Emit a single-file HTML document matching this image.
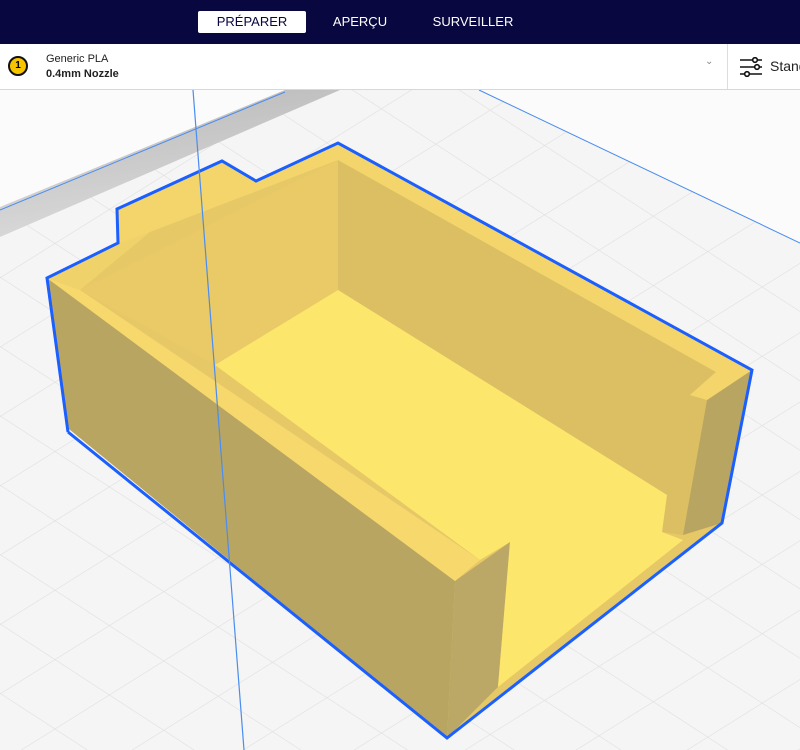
<!DOCTYPE html>
<html><head><meta charset="utf-8"><style>
body{margin:0;width:800px;height:750px;overflow:hidden;font-family:"Liberation Sans",sans-serif;background:#f3f3f3;position:relative}
.top{position:absolute;left:0;top:0;width:800px;height:44px;background:#08073f}
.tab{position:absolute;top:11px;height:22px;line-height:22px;font-size:13px;color:#fff;text-align:center;font-family:"Liberation Sans Narrow","Liberation Sans",sans-serif}
.bar{position:absolute;left:0;top:44px;width:800px;height:45px;background:#fff;border-bottom:1px solid #d8d8d8}
</style></head><body>
<svg width="800" height="750" style="position:absolute;left:0;top:0">
<defs>
<pattern id="g" width="68" height="68" patternUnits="userSpaceOnUse" patternTransform="matrix(0.8,0.52,0.8,-0.5,0,0)">
<rect width="68" height="68" fill="#f5f5f5"/>
<path d="M0 0H68M0 0V68" stroke="#dedede" stroke-width="1.3" fill="none"/>
</pattern>
<linearGradient id="b" x1="0" y1="0" x2="0.3" y2="1"><stop offset="0" stop-color="#b8b8b8"/><stop offset="1" stop-color="#dadada"/></linearGradient>
</defs>
<rect width="800" height="750" fill="url(#g)"/>
<polygon points="0,90 285,90 0,207" fill="#fbfbfb"/>
<polygon points="0,207 285,90 340,90 0,237" fill="url(#b)"/>
<polygon points="479,90 800,90 800,243" fill="#fbfbfb"/>
<line x1="0" y1="210" x2="285" y2="92" stroke="#4a8cf0" stroke-width="1"/>
<line x1="479" y1="90" x2="800" y2="243" stroke="#4a8cf0" stroke-width="1"/>
<polygon points="47,278 118,243 117,209 222,161 256,181 338,143 752,370 722,523 447,738 69,429" fill="#e7c866"/>
<polygon points="47,278 455,581 447,738 69,429" fill="#b8a562"/>
<polygon points="455,581 510,542 498,687 447,738" fill="#bca866"/>
<polygon points="338,160 338,290 667,495 662,532 683,535 707,400 690,395 716,372" fill="#dcbf62"/>
<polygon points="80,290 338,160 338,290 215,365" fill="#e9ca66"/>
<polygon points="215,365 338,290 667,495 662,532 683,540 498,687 510,542 480,560" fill="#fde66c"/>
<polygon points="707,400 752,370 722,523 683,535" fill="#b9a562"/>
<polygon points="47,278 80,290 480,560 455,581" fill="#f6d86c"/>
<polygon points="118,243 150,232 80,290 47,278" fill="#f0d26a"/>
<polygon points="117,209 222,161 256,181 338,143 338,160 150,232 120,243" fill="#f3d56c"/>
<polygon points="338,143 752,370 707,400 690,395 716,372 338,160" fill="#f3d56c"/>
<polyline points="68,432 47,278 118,243 117,209 222,161 256,181 338,143 752,370 722,523 447,738 68,432" fill="none" stroke="#1b5fff" stroke-width="3"/>
<line x1="193" y1="90" x2="244" y2="750" stroke="#4a8cf0" stroke-width="1.2"/>
</svg>
<div class="top">
<div class="tab" style="left:198px;width:108px;background:#fff;color:#08073f;border-radius:2px">PRÉPARER</div>
<div class="tab" style="left:320px;width:80px">APERÇU</div>
<div class="tab" style="left:425px;width:96px">SURVEILLER</div>
</div>
<div class="bar">
<div style="position:absolute;left:8px;top:12px;width:20px;height:20px;border-radius:50%;background:#f6c500;border:2.5px solid #111;box-sizing:border-box;font-size:10px;line-height:15px;text-align:center;font-weight:bold">1</div>
<div style="position:absolute;left:46px;top:9px;font-size:11px;color:#222">Generic PLA</div>
<div style="position:absolute;left:46px;top:24px;font-size:11px;font-weight:bold;color:#222">0.4mm Nozzle</div>
<div style="position:absolute;left:705px;top:12px;font-size:10px;color:#888">&#8964;</div>
<div style="position:absolute;left:727px;top:0;width:1px;height:45px;background:#ddd"></div>
<svg style="position:absolute;left:740px;top:13px" width="24" height="20"><g stroke="#111" stroke-width="1.6" fill="#fff"><line x1="0" y1="3" x2="22" y2="3"/><line x1="0" y1="10" x2="22" y2="10"/><line x1="0" y1="17" x2="22" y2="17"/><circle cx="15" cy="3" r="2.3"/><circle cx="17" cy="10" r="2.3"/><circle cx="7" cy="17" r="2.3"/></g></svg>
<div style="position:absolute;left:770px;top:14px;font-size:14px;color:#222">Standard</div>
</div>
</body></html>
